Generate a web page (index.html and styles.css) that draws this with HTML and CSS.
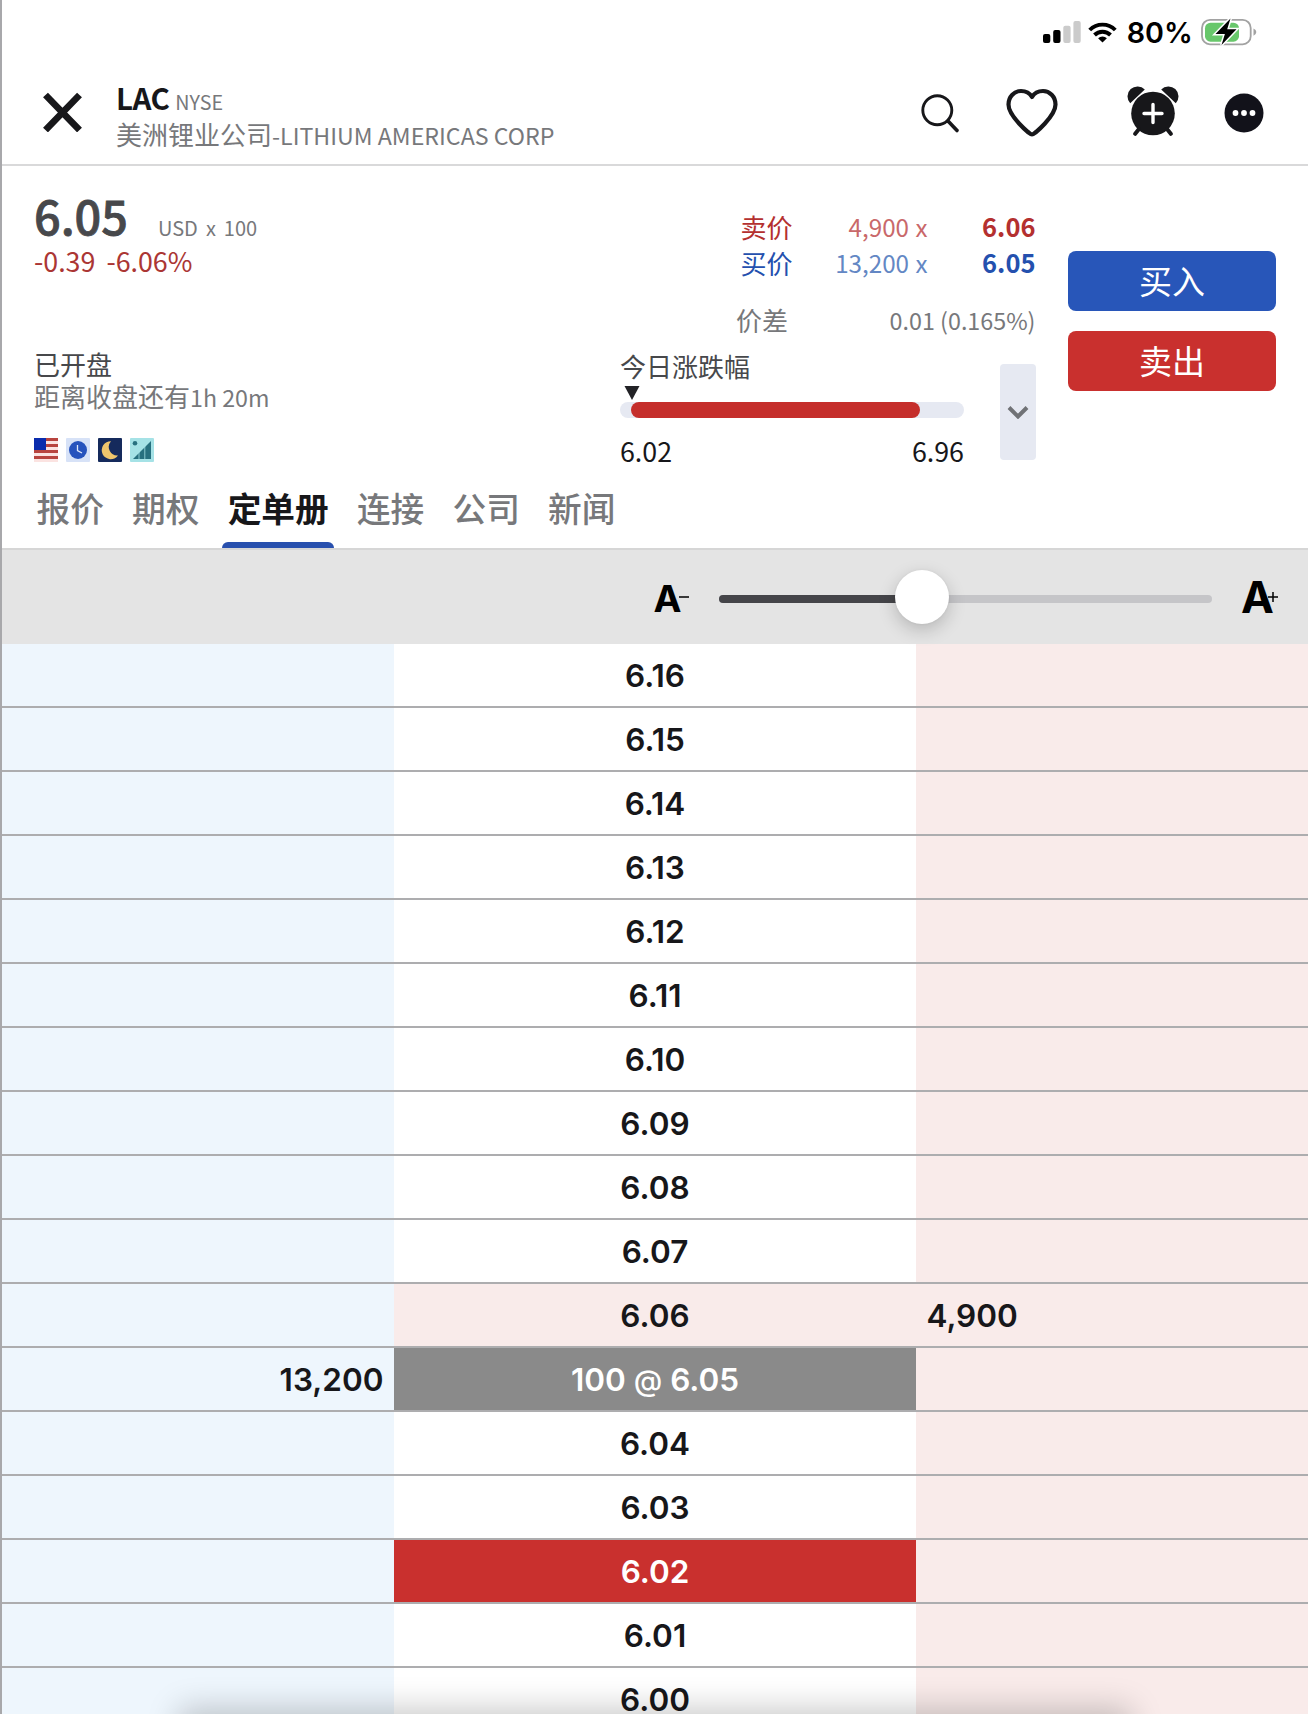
FILE: index.html
```html
<!DOCTYPE html>
<html lang="zh-CN">
<head>
<meta charset="utf-8">
<title>LAC</title>
<link rel="stylesheet" href="styles.css">
</head>
<body>
<div class="app">
  <div class="status">
    <svg class="signal" width="38" height="22" viewBox="0 0 38 22"><rect y="13" width="7.3" height="9" rx="2"/><rect x="10.2" y="9" width="7.3" height="13" rx="2"/><rect class="dim" x="20.3" y="4.7" width="7.3" height="17.3" rx="2"/><rect class="dim" x="30.4" width="7.3" height="22" rx="2"/></svg>
    <svg class="wifi" width="29" height="21" viewBox="0 0 29 21"><path d="M1.700 8a18 18 0 0 1 25.600 0M6.500 13a11.300 11.300 0 0 1 16 0" fill="none" stroke="#000" stroke-width="3.900"/><path d="M14.5 20.6l-4.4-4.4a6.3 6.3 0 0 1 8.8 0z"/></svg>
    <span class="pct">80%</span>
    <svg class="battery" width="56" height="30" viewBox="0 0 56 30"><rect x="1" y="2.900" width="48.700" height="24.400" rx="8" fill="none" stroke="#a2a2a2" stroke-width="1.800"/><path d="M52.500 11.500q2.800 1 2.800 3.6t-2.8 3.6z" fill="#a2a2a2"/><rect x="4" y="5.700" width="34" height="19" rx="5.5" fill="#68c76b"/><path d="M29.500 1.500L14.500 17h9.400L20.500 28 35.500 12.300h-9.300z" fill="#000" stroke="#fff" stroke-width="3" paint-order="stroke"/></svg>
  </div>

  <header class="head">
    <svg class="close" width="40" height="40" viewBox="0 0 40 40"><path d="M3.500 3L37.500 38M37.500 3L3.500 38" stroke="#17171a" stroke-width="6.800"/></svg>
    <div class="name">
      <div class="symbol"><b>LAC</b><span>NYSE</span></div>
      <div class="company">美洲锂业公司<span class="lat">-LITHIUM AMERICAS CORP</span></div>
    </div>
    <div class="tools">
      <svg class="search" width="42" height="42" viewBox="0 0 42 42" fill="none" stroke="#17171a" stroke-linecap="round"><circle cx="17.300" cy="17.300" r="14.500" stroke-width="2.900"/><path d="M28 28L37 37.500" stroke-width="3.600"/></svg>
      <svg class="heart" width="54" height="50" viewBox="0 0 54 50"><path d="M27 46.300C24.500 46.300 3.500 28 3.500 16.500C3.500 8.500 9.500 3 16 3C21 3 25 5.500 27 9C29 5.500 33 3 38 3C44.500 3 50.500 8.500 50.500 16.500C50.500 28 29.500 46.300 27 46.300Z" fill="none" stroke="#17171a" stroke-width="4.200" stroke-linejoin="round"/></svg>
      <svg class="alarm" width="52" height="50" viewBox="0 0 52 50" fill="#17171a"><path d="M3.200 17.200A9.900 9.900 0 0 1 17.800 3.600Z"/><path d="M48.800 17.200A9.900 9.900 0 0 0 34.200 3.600Z"/><circle cx="26" cy="27.500" r="21.800"/><path d="M12 43L8.200 47.800M40 43L43.800 47.800" stroke="#17171a" stroke-width="4" stroke-linecap="round"/><path d="M26 18.500V36.500M17 27.500H35" stroke="#fff" stroke-width="3.400" stroke-linecap="round"/></svg>
      <svg class="more" width="40" height="40" viewBox="0 0 40 40"><circle cx="20" cy="20" r="19.500" fill="#12121a"/><g fill="#fff"><circle cx="11.500" cy="20" r="2.900"/><circle cx="20" cy="20" r="2.900"/><circle cx="28.500" cy="20" r="2.900"/></g></svg>
    </div>
  </header>

  <section class="quote">
    <div class="left">
      <div class="price"><b>6.05</b><span>USD</span><span>x</span><span>100</span></div>
      <div class="change"><span>-0.39</span><span>-6.06%</span></div>
      <div class="state">已开盘</div>
      <div class="remain">距离收盘还有<span class="lat">1h 20m</span></div>
      <div class="badges">
        <svg width="24" height="24" viewBox="0 0 24 24"><path fill="#fbe3e1" d="M0 0h24v24H0z"/><path fill="#b8443f" d="M0 0h24v3H0zM0 6h24v3H0zM0 12h24v3H0zM0 18h24v3H0z"/><path fill="#0b2cad" d="M0 0h12v12H0z"/></svg>
        <svg width="24" height="24" viewBox="0 0 24 24"><rect width="24" height="24" rx="1" fill="#d7e2f7"/><circle cx="12" cy="12" r="9" fill="#2653bd"/><path d="M11.500 7v5.500l4.500 2.500" fill="none" stroke="#dfe8fa" stroke-width="1.300"/></svg>
        <svg width="24" height="24" viewBox="0 0 24 24"><rect width="24" height="24" rx="1" fill="#152a5c"/><path d="M13 3.200A9 9 0 1 0 20 17.500A8.600 8.600 0 0 1 13 3.200Z" fill="#efc56c"/></svg>
        <svg width="24" height="24" viewBox="0 0 24 24"><rect width="24" height="24" rx="1" fill="#a5e2e6"/><path d="M3 21L21 3V21Z" fill="#27707f"/><path d="M9 14v7M14.800 8v13" stroke="#a5e2e6" stroke-width=".8"/><circle cx="5" cy="5.200" r="2.300" fill="#27707f"/></svg>
      </div>
    </div>

    <div class="mid">
      <div class="book ask"><span class="lbl">卖价</span><span class="qty">4,900 x</span><b>6.06</b></div>
      <div class="book bid"><span class="lbl">买价</span><span class="qty">13,200 x</span><b>6.05</b></div>
      <div class="spread"><span class="lbl">价差</span><span class="val">0.01 (0.165%)</span></div>
      <div class="lower">
        <div class="range">
          <div class="title">今日涨跌幅</div>
          <svg class="mark" width="16" height="14" viewBox="0 0 16 14"><path d="M.5 0h15L8 14z" fill="#222226"/></svg>
          <div class="track"><div class="fill"></div></div>
          <div class="ends"><span>6.02</span><span>6.96</span></div>
        </div>
        <div class="expand"><svg width="22" height="14" viewBox="0 0 22 14"><path d="M2 2.500l9 9 9-9" fill="none" stroke="#707276" stroke-width="4"/></svg></div>
      </div>
    </div>

    <div class="actions">
      <div class="btn buy">买入</div>
      <div class="btn sell">卖出</div>
    </div>
  </section>

  <nav class="tabs"><span>报价</span><span>期权</span><span class="on">定单册</span><span>连接</span><span>公司</span><span>新闻</span></nav>

  <div class="zoombar">
    <span class="small">A</span><svg class="sign" width="10" height="10" viewBox="0 0 10 10"><path d="M0 5h10" stroke="#000" stroke-width="1.500"/></svg>
    <div class="slider"><div class="done"></div><div class="thumb"></div></div>
    <span class="large">A</span><svg class="sign plus" width="10" height="10" viewBox="0 0 10 10"><path d="M0 5h10M5 0v10" stroke="#000" stroke-width="1.500"/></svg>
  </div>

  <main class="ladder">
    <div class="row"><i></i><span>6.16</span><i></i></div>
    <div class="row"><i></i><span>6.15</span><i></i></div>
    <div class="row"><i></i><span>6.14</span><i></i></div>
    <div class="row"><i></i><span>6.13</span><i></i></div>
    <div class="row"><i></i><span>6.12</span><i></i></div>
    <div class="row"><i></i><span>6.11</span><i></i></div>
    <div class="row"><i></i><span>6.10</span><i></i></div>
    <div class="row"><i></i><span>6.09</span><i></i></div>
    <div class="row"><i></i><span>6.08</span><i></i></div>
    <div class="row"><i></i><span>6.07</span><i></i></div>
    <div class="row best"><i></i><span>6.06</span><i>4,900</i></div>
    <div class="row last"><i>13,200</i><span>100 <em>@</em> 6.05</span><i></i></div>
    <div class="row"><i></i><span>6.04</span><i></i></div>
    <div class="row"><i></i><span>6.03</span><i></i></div>
    <div class="row low"><i></i><span>6.02</span><i></i></div>
    <div class="row"><i></i><span>6.01</span><i></i></div>
    <div class="row"><i></i><span>6.00</span><i></i></div>
  </main>
  <div class="shade"></div>
</div>
</body>
</html>
```
FILE: styles.css
```css
* { box-sizing: border-box; }
body { margin: 0; background: #fff; }
svg { display: block; flex: none; }
.app {
  position: relative;
  width: 1308px;
  height: 1714px;
  overflow: hidden;
  border-left: 2px solid #a8a8ab;
  font-family: "Noto Sans CJK SC", sans-serif;
  color: #17171a;
  white-space: nowrap;
}
.lat { font-size: 23.200px; }

.status { display: flex; height: 64px; padding-left: 1040.700px; }
.signal { margin-top: 21px; }
.signal .dim { fill: #cbcbcb; }
.wifi { margin: 22px 0 0 7.500px; }
.pct { margin-left: 9.500px; width: 74px; font: 600 28.700px/65px Inter, sans-serif; color: #000; }
.battery { margin-top: 17px; }

.head { display: flex; height: 102px; border-bottom: 2px solid #d9d9da; }
.close { margin: 28px 0 0 40px; }
.name { margin: 15px 0 0 34px; flex: 1; }
.symbol { display: flex; align-items: baseline; height: 36px; line-height: 36px; gap: 6px; }
.symbol b { font-size: 29.500px; font-weight: 700; letter-spacing: -.5px; }
.symbol span { font-size: 19.700px; color: #77787b; }
.company { margin-top: 1px; font-size: 26px; line-height: 36px; color: #77787b; }
.tools { display: flex; width: 388px; }
.search { margin-top: 29px; }
.heart { margin: 23.500px 0 0 42.500px; }
.alarm { margin: 22px 0 0 68px; }
.more { margin: 29px 0 0 45px; }

.quote { display: flex; height: 312px; }
.left { width: 586px; padding: 16px 0 0 32px; }
.price { display: flex; align-items: baseline; height: 66px; line-height: 66px; }
.price b { font-size: 46.800px; font-weight: 500; -webkit-text-stroke: .8px #47484b; color: #47484b; width: 124px; }
.price span { position: relative; top: 1px; font-size: 20px; color: #77787b; margin-right: 8px; }
.change { display: flex; gap: 11px; margin-top: -5px; font-size: 26.800px; line-height: 36px; color: #ab3634; }
.state { margin-top: 67px; font-size: 26px; line-height: 36px; color: #47484b; }
.remain { margin-top: -4px; font-size: 26px; line-height: 36px; color: #77787b; }
.badges { display: flex; gap: 8px; margin-top: 23px; }

.mid { width: 448px; padding: 42px 0 0 32px; }
.book { display: grid; grid-template-columns: 70px 117px 1fr; height: 36px; line-height: 36px; align-items: baseline; margin-left: 120.500px; width: 295px; }
.lbl { position: relative; top: 1px; font-size: 26px; }
.qty { text-align: right; font-size: 24.200px; word-spacing: 1px; }
.book b { text-align: right; font-size: 25.500px; font-weight: 700; }
.ask { color: #b4302f; }
.ask .qty { color: #c9686a; }
.bid { color: #2450ae; }
.bid .qty { color: #6387c4; }
.spread { display: flex; justify-content: space-between; align-items: baseline; margin: 21px 0 0 116px; width: 299.500px; height: 36px; line-height: 36px; color: #77787b; }
.spread .val { font-size: 23.300px; }
.lower { display: flex; justify-content: space-between; width: 416px; margin-top: 11px; }
.range { width: 344px; }
.title { font-size: 26px; line-height: 36px; color: #47484b; }
.mark { margin: 2px 0 2px 3.500px; }
.track { height: 16px; border-radius: 8px; background: #e6e9f2; padding: 0 44px 0 11px; }
.fill { height: 16px; border-radius: 8px; background: #c52e2b; }
.ends { display: flex; justify-content: space-between; margin-top: 15px; font-size: 26.800px; line-height: 36px; }
.expand { width: 36px; height: 96px; margin-top: 16px; border-radius: 4px; background: #e6e9f2; display: flex; align-items: center; justify-content: center; }

.actions { display: flex; flex-direction: column; gap: 20px; padding: 85px 0 0 32px; }
.btn { width: 208px; height: 60px; border-radius: 8px; color: #fff; text-align: center; font-size: 33px; line-height: 58px; font-weight: 400; }
.buy { background: #2856b9; }
.sell { background: #c9302e; }

.tabs { display: flex; gap: 14.200px; height: 72px; padding-left: 27.500px; border-bottom: 2px solid #d6d6d6; font-size: 33.700px; font-weight: 500; line-height: 60px; color: #77787b; }
.tabs span { display: flex; flex-direction: column; justify-content: space-between; padding: 0 7px; height: 70px; }
.tabs .on { color: #17171a; font-weight: 700; }
.tabs .on::after { content: ""; height: 6px; margin: 0 -5.500px; border-radius: 6px 6px 0 0; background: #2850ae; }

.zoombar { display: flex; height: 94px; background: #e4e4e4; padding-left: 651.500px; font-family: Inter, sans-serif; font-weight: 700; color: #000; line-height: 94px; }
.small { font-size: 37.500px; width: 26.500px; padding-top: 3px; line-height: 91px; }
.sign { margin: 42px 0 0 -1px; }
.slider { position: relative; width: 493px; height: 8px; margin: 45px 0 0 30px; border-radius: 4px; background: #c5c5c8; }
.large { font-size: 44px; width: 31px; margin-left: 29px; padding-top: 2px; line-height: 91px; }
.plus { margin-left: -4px; }
.done { width: 190px; height: 8px; border-radius: 4px; background: #454549; }
.thumb { position: absolute; left: 176px; top: -25px; width: 54px; height: 54px; border-radius: 50%; background: #fff; box-shadow: 0 6px 18px rgba(0,0,0,.2), 0 0 3px rgba(0,0,0,.06); }

.ladder { font: 600 31.500px/59px Inter, sans-serif; }
.row { display: grid; grid-template-columns: 392px 522px 392px; grid-template-rows: 62px; height: 64px; border-bottom: 2px solid #adadaf; }
.row > * { padding-top: 2px; }
.row i { font-style: normal; background: #eef6fd; text-align: right; padding: 2px 10.500px 0; }
.row i:last-child { background: #f9ebea; text-align: left; }
.row span { text-align: center; }
.best span { background: #f9ebea; }
.last span { background: #8a8a8a; color: #fff; }
.last em { font-style: normal; font-weight: 500; font-size: 29px; }
.low span { background: #c9302e; color: #fff; }
.shade { position: absolute; left: 182px; right: 182px; bottom: -50px; height: 50px; box-shadow: 0 0 32px 5px rgba(0,0,0,.22); }
```
